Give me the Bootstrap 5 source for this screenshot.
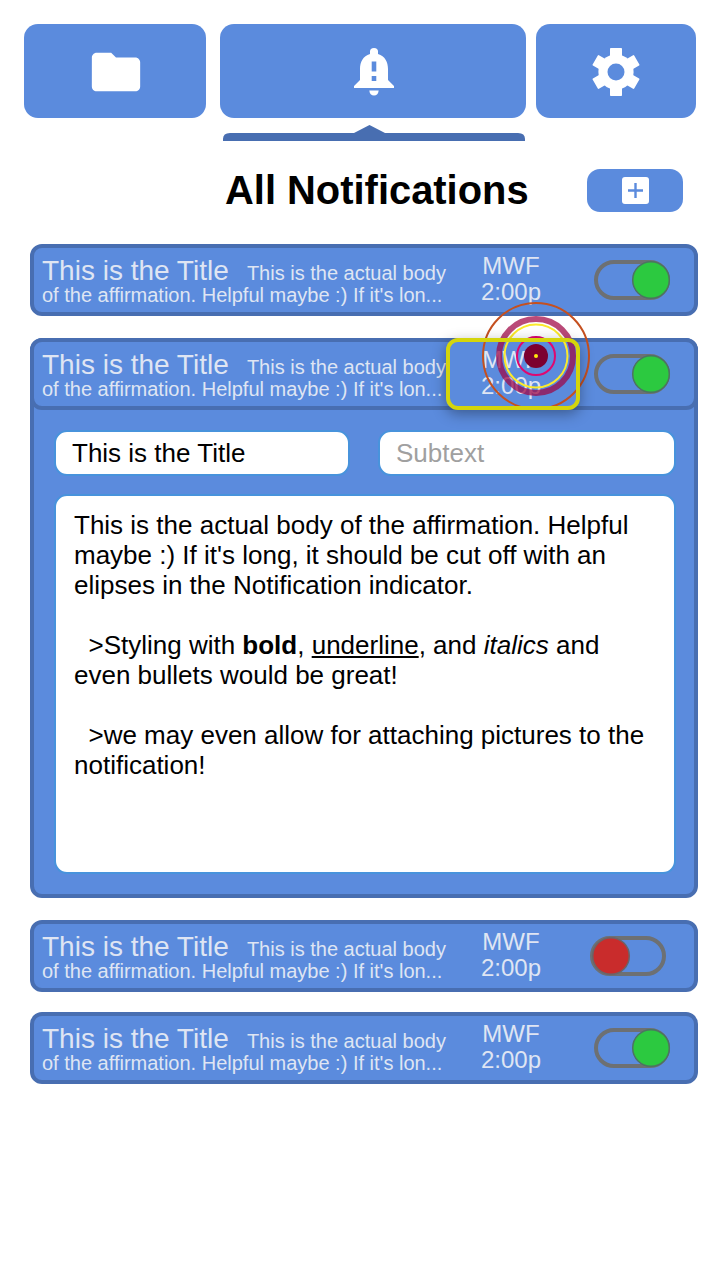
<!DOCTYPE html>
<html lang="en">
<head>
<meta charset="utf-8">
<meta name="viewport" content="width=device-width, initial-scale=1">
<title>All Notifications</title>
<link rel="stylesheet" href="https://cdn.jsdelivr.net/npm/bootstrap@5.3.0/dist/css/bootstrap.min.css">
<style>
  :root { --blue: #5b8bdd; --edge: #486eb1; --pale: #dfe5f3; }
  body { font-family: "Liberation Sans", Arial, sans-serif; color: #000; background: #fff; }
  .screen { width: 720px; height: 1280px; overflow: hidden; }
  .tabs { padding: 24px 24px 0; height: 118px; }
  .tab-btn { background: var(--blue); border: 0; border-radius: 14px; height: 94px; padding: 2px 0 0; }
  .tab-btn:hover { background: var(--blue); }
  .tab-btn svg, .add-btn svg, .toggle svg, .marker { display: block; }
  .t1 { width: 182px; margin-right: 14px; padding-left: 2px; }
  .t2 { width: 306px; margin-right: 10px; padding-left: 2px; }
  .t3 { width: 160px; }
  .heading { height: 103px; padding: 28px 37px 0 225px; }
  .heading h1 { font-size: 39.9px; line-height: 43px; }
  .add-btn { width: 96px; height: 43px; border-radius: 13px; background: var(--blue); border: 0; padding: 0; }
  .notices { padding: 0 22px 0 30px; }
  .notice { background: var(--blue); border: 4px solid var(--edge); border-radius: 12px; color: var(--pale); }
  .summary-row { height: 72px; }
  .open-box { height: 560px; margin: 22px 0; }
  .open-box > .summary-row { margin: -4px -4px 0; }
  .blurb { width: 422px; padding: 12px 0 0 8px; font-size: 20px; line-height: 22px; white-space: nowrap; }
  .blurb .ttl { font-size: 28px; margin-right: 1.5px; }
  .when { width: 110px; padding-top: 5px; font-size: 24px; line-height: 26px; }
  .toggle { margin: 10px 0 0 24px; }
  .field-box { background: #fff; border: 2px solid #4893dc; border-radius: 13px; color: #000; font-size: 26px; }
  .field-box.one { height: 46px; padding: 0 16px; line-height: 42px; }
  .field-box.many { height: 380px; margin-top: 18px; padding: 14px 18px; line-height: 30px; }
  .fields { padding: 20px 18px 0 20px; }
  .frame { position: absolute; left: 412px; top: -4px; width: 134px; height: 72px; border: 4px solid #d4d50b; border-radius: 12px; box-shadow: 0 4px 14px rgba(0,0,0,.35); }
  .marker { position: absolute; left: 446px; top: -42px; }
</style>
</head>
<body>
<main class="screen">
  <nav class="tabs d-flex">
    <button class="btn tab-btn t1 d-flex align-items-center justify-content-center" aria-label="Folders">
      <svg width="58" height="58" viewBox="0 0 24 24" fill="#fff"><path d="M10 4H4c-1.100 0-1.990.9-1.990 2L2 18c0 1.100.9 2 2 2h16c1.100 0 2-.9 2-2V8c0-1.100-.9-2-2-2h-8l-2-2z"/></svg>
    </button>
    <button class="btn tab-btn t2 d-flex align-items-center justify-content-center" aria-label="Notifications">
      <svg width="60" height="60" viewBox="344 42 60 60" fill="#fff"><path fill-rule="evenodd" d="M370 54V51.500Q370 48 374 48T378 51.500V54C385 56 388 62 388 69V80L394 86V88H354V86L360 80V69C360 62 363 56 370 54zM371.700 61.500V71.500H376.300V61.500zM371.700 76V81H376.300V76z"/><path d="M369.300 90.500h9.400q-.6 5-4.700 5t-4.700-5z"/></svg>
    </button>
    <button class="btn tab-btn t3 d-flex align-items-center justify-content-center" aria-label="Settings">
      <svg width="60" height="60" viewBox="-30 -30 60 60" fill="#fff"><circle r="17.600"/><rect x="-6" y="-24" width="12" height="48" rx=".8"/><rect x="-6" y="-24" width="12" height="48" rx=".8" transform="rotate(60)"/><rect x="-6" y="-24" width="12" height="48" rx=".8" transform="rotate(120)"/><circle r="8.500" fill="#5b8bdd"/></svg>
    </button>
  </nav>
  <svg class="d-block" width="720" height="23" viewBox="0 0 720 23" fill="#486eb1"><path d="M223 23v-2q0-6 7-6H354l15.500-8L385 15H518q7 0 7 6v2z"/></svg>

  <header class="heading d-flex justify-content-between">
    <h1 class="fw-bold mb-0">All Notifications</h1>
    <button class="btn add-btn d-flex align-items-center justify-content-center" aria-label="Add">
      <svg width="27" height="27" viewBox="0 0 27 27"><rect width="27" height="27" rx="3" fill="#fff"/><path d="M13.500 6v15M6 13.500h15" stroke="#5b8bdd" stroke-width="2.400"/></svg>
    </button>
  </header>

  <section class="notices">
    <article class="notice summary-row d-flex">
      <div class="blurb"><span class="ttl">This is the Title</span>&nbsp;&nbsp;&nbsp;This is the actual body<br>of the affirmation. Helpful maybe :) If it's lon...</div>
      <div class="when text-center">MWF<br>2:00p</div>
      <div class="toggle"><svg width="84" height="44" viewBox="590 258 84 44"><rect x="596" y="262" width="72" height="36" rx="18" fill="none" stroke="#6d7073" stroke-width="4"/><circle cx="651" cy="280" r="18.300" fill="#2cc940" stroke="#4c7461" stroke-width="1.500"/></svg></div>
    </article>

    <article class="notice open-box position-relative">
      <div class="notice summary-row d-flex">
        <div class="blurb"><span class="ttl">This is the Title</span>&nbsp;&nbsp;&nbsp;This is the actual body<br>of the affirmation. Helpful maybe :) If it's lon...</div>
        <div class="when text-center">MWF<br>2:00p</div>
        <div class="toggle"><svg width="84" height="44" viewBox="590 258 84 44"><rect x="596" y="262" width="72" height="36" rx="18" fill="none" stroke="#6d7073" stroke-width="4"/><circle cx="651" cy="280" r="18.300" fill="#2cc940" stroke="#4c7461" stroke-width="1.500"/></svg></div>
      </div>
      <div class="fields">
        <div class="d-flex justify-content-between">
          <div class="field-box one" style="width:296px">This is the Title</div>
          <div class="field-box one" style="width:298px;color:#a0a0a0">Subtext</div>
        </div>
        <div class="field-box many">This is the actual body of the affirmation. Helpful<br>maybe :) If it's long, it should be cut off with an<br>elipses in the Notification indicator.<br><br>&nbsp; &gt;Styling with <b>bold</b>, <u>underline</u>, and <i>italics</i> and<br>even bullets would be great!<br><br>&nbsp; &gt;we may even allow for attaching pictures to the<br>notification!</div>
      </div>
      <svg class="marker" width="112" height="112" viewBox="480 300 112 112" fill="none">
        <circle cx="536" cy="356" r="53" stroke="#c5501f" stroke-width="2"/>
        <circle cx="536" cy="356" r="37" stroke="#a00444" stroke-opacity=".72" stroke-width="6"/>
        <circle cx="536" cy="356" r="31.500" stroke="#fbe92c" stroke-width="2"/>
        <circle cx="536" cy="356" r="19" stroke="#df0870" stroke-width="2"/>
        <circle cx="536" cy="356" r="12" fill="#7c0030"/>
        <circle cx="536" cy="356" r="2" fill="#ffe60c"/>
      </svg>
      <div class="frame"></div>
    </article>

    <article class="notice summary-row d-flex">
      <div class="blurb"><span class="ttl">This is the Title</span>&nbsp;&nbsp;&nbsp;This is the actual body<br>of the affirmation. Helpful maybe :) If it's lon...</div>
      <div class="when text-center">MWF<br>2:00p</div>
      <div class="toggle"><svg width="84" height="44" viewBox="590 258 84 44"><rect x="592" y="262" width="72" height="36" rx="18" fill="none" stroke="#6d7073" stroke-width="4"/><circle cx="611" cy="280" r="18.300" fill="#c92c2c" stroke="#6b6468" stroke-width="1.500"/></svg></div>
    </article>

    <article class="notice summary-row d-flex" style="margin-top:20px">
      <div class="blurb"><span class="ttl">This is the Title</span>&nbsp;&nbsp;&nbsp;This is the actual body<br>of the affirmation. Helpful maybe :) If it's lon...</div>
      <div class="when text-center">MWF<br>2:00p</div>
      <div class="toggle"><svg width="84" height="44" viewBox="590 258 84 44"><rect x="596" y="262" width="72" height="36" rx="18" fill="none" stroke="#6d7073" stroke-width="4"/><circle cx="651" cy="280" r="18.300" fill="#2cc940" stroke="#4c7461" stroke-width="1.500"/></svg></div>
    </article>
  </section>
</main>
<script src="https://cdn.jsdelivr.net/npm/bootstrap@5.3.0/dist/js/bootstrap.bundle.min.js"></script>
</body>
</html>
